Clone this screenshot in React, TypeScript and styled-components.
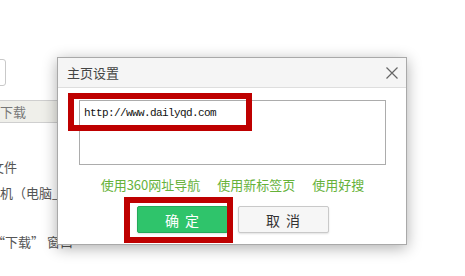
import React from 'react';
import styled, { createGlobalStyle } from 'styled-components';

const GlobalStyle = createGlobalStyle`
  html, body, #root {
    margin: 0;
    padding: 0;
    background: #fff;
    font-family: 'Noto Sans CJK SC', 'Noto Sans', sans-serif;
  }
`;

const Page = styled.div`
  position: relative;
  width: 465px;
  height: 276px;
  overflow: hidden;
  background: #fff;
`;

const Backdrop = styled.div`
  display: flex;
  flex-direction: column;
  width: 140px;
  color: #555;
  font-size: 13px;
`;

const SearchBox = styled.div`
  margin-top: 59px;
  margin-left: -24px;
  width: 30px;
  height: 27px;
  box-sizing: border-box;
  border: 1px solid #c9c9c9;
  border-radius: 3px;
  background: #fff;
`;

const DownloadBar = styled.div`
  margin-top: 14px;
  height: 23px;
  box-sizing: border-box;
  border-top: 1px solid #cfcfcf;
  border-bottom: 1px solid #cfcfcf;
  background: #efefea;
  color: #777;
  line-height: 21px;
`;

const TextLine = styled.div<{ $top: number; $indent: number }>`
  margin-top: ${p => p.$top}px;
  line-height: 20px;
  white-space: nowrap;
  text-indent: ${p => p.$indent}px;
`;

const Dialog = styled.div`
  position: absolute;
  left: 57px;
  top: 57px;
  width: 350px;
  height: 188px;
  box-sizing: border-box;
  border: 1px solid #a9a9a9;
  background: #fff;
  box-shadow: 0 3px 14px rgba(0, 0, 0, 0.32);
  display: flex;
  flex-direction: column;
`;

const Header = styled.div`
  height: 29px;
  border-bottom: 1px solid #dedede;
  background: #f5f5f5;
  display: flex;
  align-items: center;
  justify-content: space-between;
  padding: 0 8px 0 9px;
`;

const Title = styled.span`
  font-size: 13px;
  color: #444;
`;

const CloseButton = styled.button`
  width: 12px;
  height: 12px;
  padding: 0;
  border: 0;
  background: none;
  display: flex;
  cursor: pointer;
`;

const Body = styled.div`
  padding: 12px 20px 0 21px;
  display: flex;
  flex-direction: column;
  align-items: center;
`;

const UrlArea = styled.textarea`
  width: 307px;
  height: 65px;
  box-sizing: border-box;
  border: 1px solid #acacac;
  padding: 5px 4px;
  margin: 0;
  resize: none;
  outline: none;
  font-family: 'Liberation Mono', monospace;
  font-size: 11px;
  letter-spacing: -0.6px;
  line-height: 14px;
  color: #111;
`;

const Links = styled.div`
  margin-top: 11px;
  display: flex;
  gap: 17px;
  line-height: 18px;
`;

const Link = styled.a`
  font-size: 13px;
  color: #66b23a;
  text-decoration: none;
  cursor: pointer;
`;

const Buttons = styled.div`
  margin-top: 12px;
  display: flex;
  gap: 10px;
`;

const Button = styled.button<{ $primary?: boolean }>`
  width: 91px;
  height: 27px;
  box-sizing: border-box;
  border-radius: 2px;
  font-family: 'Noto Sans CJK SC', sans-serif;
  font-size: 14px;
  letter-spacing: 6px;
  padding: 0 0 0 6px;
  cursor: pointer;
  border: 1px solid ${p => (p.$primary ? '#25a95a' : '#c9c9c9')};
  background: ${p => (p.$primary ? '#2fc46b' : '#f6f6f6')};
  color: ${p => (p.$primary ? '#fff' : '#333')};
  box-shadow: 0 1px 2px rgba(0, 0, 0, 0.12);
`;

const Highlight = styled.div<{ $x: number; $y: number; $w: number; $h: number }>`
  position: absolute;
  left: ${p => p.$x}px;
  top: ${p => p.$y}px;
  width: ${p => p.$w}px;
  height: ${p => p.$h}px;
  box-sizing: border-box;
  border: 6px solid #be0000;
  pointer-events: none;
`;

const CloseIcon = () => (
  <svg width="12" height="12" viewBox="0 0 12 12">
    <path d="M0.5 0.5 L11.5 11.5 M11.5 0.5 L0.5 11.5" stroke="#666" strokeWidth="1.2" fill="none" />
  </svg>
);

export default function App() {
  return (
    <>
      <GlobalStyle />
      <Page>
        <Backdrop>
          <SearchBox />
          <DownloadBar>下载</DownloadBar>
          <TextLine $top={34} $indent={-9}>文件</TextLine>
          <TextLine $top={6} $indent={0}>机（电脑_____</TextLine>
          <TextLine $top={29} $indent={-8}>“下载” 窗口</TextLine>
        </Backdrop>

        <Dialog>
          <Header>
            <Title>主页设置</Title>
            <CloseButton aria-label="关闭">
              <CloseIcon />
            </CloseButton>
          </Header>
          <Body>
            <UrlArea defaultValue="http://www.dailyqd.com" />
            <Links>
              <Link>使用360网址导航</Link>
              <Link>使用新标签页</Link>
              <Link>使用好搜</Link>
            </Links>
            <Buttons>
              <Button $primary>确定</Button>
              <Button>取消</Button>
            </Buttons>
          </Body>
        </Dialog>

        <Highlight $x={68} $y={93} $w={184} $h={38} />
        <Highlight $x={124} $y={197} $w={109} $h={46} />
      </Page>
    </>
  );
}
